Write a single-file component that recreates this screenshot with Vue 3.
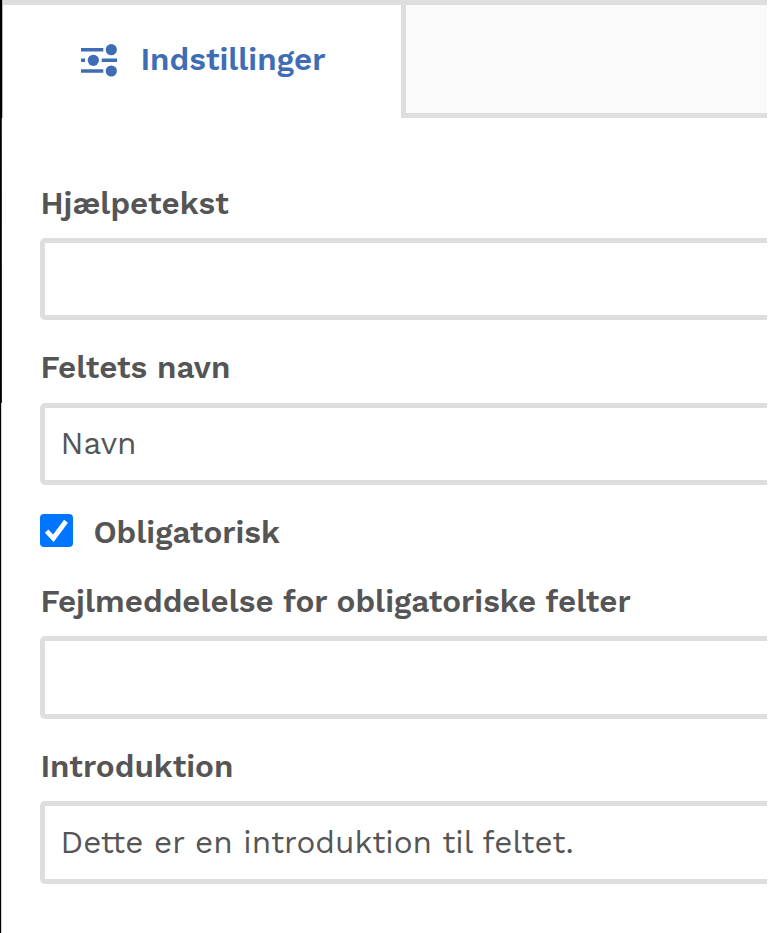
<template>
	<main class="editor">
		<header class="tabs">
			<button class="tab active" type="button">
				<svg class="tab-icon" width="38" height="34" viewBox="0 0 38 34" aria-hidden="true">
					<path d="M1 6.7h22.3M1 17.3h4M21.7 17.3H37M1 28h22.3" stroke="currentColor" stroke-width="3.4" />
					<circle cx="31.3" cy="6.7" r="5.6" fill="currentColor" />
					<circle cx="13.3" cy="17.3" r="5.6" fill="currentColor" />
					<circle cx="31.3" cy="28" r="5.6" fill="currentColor" />
				</svg>
				<span class="tab-label">Indstillinger</span>
			</button>
			<div class="tab-rest"></div>
		</header>

		<form class="fields" @submit.prevent>
			<label class="field help">
				<span class="label">Hjælpetekst</span>
				<input v-model="form.help" class="input" type="text" />
			</label>

			<label class="field name">
				<span class="label">Feltets navn</span>
				<input v-model="form.name" class="input" type="text" />
			</label>

			<label class="check">
				<input v-model="form.required" class="check-input" type="checkbox" />
				<span class="check-box">
					<svg v-if="form.required" width="33" height="33" viewBox="0 0 33 33" aria-hidden="true">
						<path d="M6.6 17.2l6.8 7L26 7.2" fill="none" stroke="#ffffff" stroke-width="4.8" />
					</svg>
				</span>
				<span class="label">Obligatorisk</span>
			</label>

			<label class="field error">
				<span class="label">Fejlmeddelelse for obligatoriske felter</span>
				<input v-model="form.error" class="input" type="text" />
			</label>

			<label class="field intro">
				<span class="label">Introduktion</span>
				<input v-model="form.intro" class="input" type="text" />
			</label>
		</form>
	</main>
</template>

<script setup>
import { reactive } from "vue";

const form = reactive({
	help: "",
	name: "Navn",
	required: true,
	error: "",
	intro: "Dette er en introduktion til feltet.",
});
</script>

<style>
body {
	margin: 0;
	background: #ffffff;
}
</style>

<style scoped>
.editor {
	box-sizing: border-box;
	width: 767px;
	height: 933px;
	overflow: hidden;
	background:
		linear-gradient(#000000, #000000) 0 0 / 1px 933px no-repeat,
		linear-gradient(#000000 118px, #333333 118px, #222222 403px, #d0d0d0 403px) 1px 0 / 1px 933px no-repeat,
		linear-gradient(#b8b8b8, #b8b8b8) 2px 0 / 1px 118px no-repeat,
		#ffffff;
	font-family: "Work Sans", Inter, sans-serif;
	font-size: 31.45px;
	line-height: 40px;
	color: #555555;
}

.tabs {
	display: flex;
	box-sizing: border-box;
	height: 118px;
	margin-left: 3px;
	border-top: 5px solid #dedede;
}

.tab {
	display: flex;
	align-items: flex-start;
	box-sizing: border-box;
	width: 398px;
	padding: 35px 0 0 77px;
	border: none;
	background: none;
	color: #3e6db5;
	font: inherit;
	font-weight: 600;
	cursor: pointer;
}

.tab-icon {
	flex: none;
	margin: 3px 22.4px 0 0;
}

.tab-rest {
	flex: 1;
	border-left: 5px solid #dedede;
	border-bottom: 5px solid #dedede;
	background: #fafafa;
}

.fields {
	display: flex;
	flex-direction: column;
	padding: 66px 0 0 40px;
}

.field {
	display: flex;
	flex-direction: column;
	margin-bottom: 28px;
}

.label {
	height: 40px;
	margin-bottom: 14px;
	padding-left: 0.4px;
	font-weight: 600;
	white-space: nowrap;
}

.name .label {
	margin-bottom: 15px;
}

.input {
	box-sizing: border-box;
	width: 740px;
	height: 82px;
	padding: 0 15.5px 2px;
	border: 5px solid #dedede;
	border-radius: 5px;
	outline: none;
	background: #ffffff;
	color: #555555;
	font: inherit;
}

.error .input,
.intro .input {
	height: 83px;
	padding-bottom: 1px;
}

.check {
	display: flex;
	align-items: flex-start;
	height: 40px;
	margin-bottom: 29px;
}

.check-input {
	position: absolute;
	opacity: 0;
}

.check-box {
	width: 33px;
	height: 33px;
	margin: 1px 20px 0 0;
	border-radius: 4px;
	background: #0075ff;
}

.check-box svg {
	display: block;
}
</style>
